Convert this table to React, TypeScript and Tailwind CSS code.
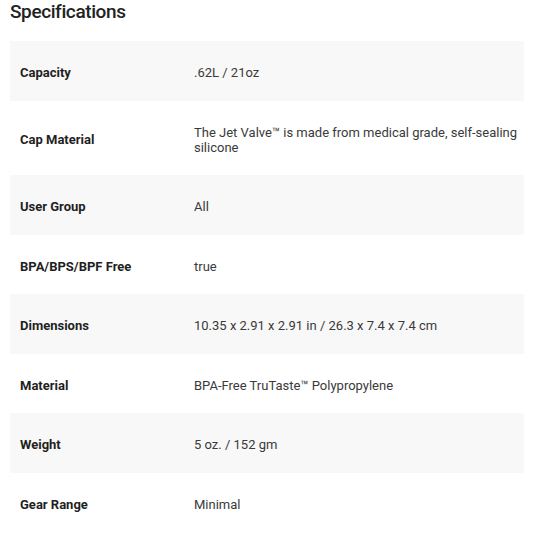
import React from "react";

// Linhas da tabela de especificações
const specs: { label: string; value: string }[] = [
  { label: "Capacity", value: ".62L / 21oz" },
  { label: "Cap Material", value: "The Jet Valve™ is made from medical grade, self-sealing silicone" },
  { label: "User Group", value: "All" },
  { label: "BPA/BPS/BPF Free", value: "true" },
  { label: "Dimensions", value: "10.35 x 2.91 x 2.91 in / 26.3 x 7.4 x 7.4 cm" },
  { label: "Material", value: "BPA-Free TruTaste™ Polypropylene" },
  { label: "Weight", value: "5 oz. / 152 gm" },
  { label: "Gear Range", value: "Minimal" },
];

const App: React.FC = () => {
  return (
    <div className="w-[533px] h-[533px] overflow-hidden bg-white font-['Roboto',sans-serif] text-[#333]">
      <h2 className="px-[10px] h-[41px] text-[19px] leading-[24px] font-medium tracking-[-0.4px] text-[#222]">Specifications</h2>
      <div className="mx-[10px] w-[514px]">
        {specs.map((row, i) => (
          <div
            key={row.label}
            className={`flex items-center pt-[24px] pb-[20.5px] leading-[15px] ${i % 2 === 0 ? "bg-[#f8f8f8]" : "bg-white"}`}
          >
            <div className="w-[184px] shrink-0 pl-[10px] text-[13px] font-bold text-[#1f1f1f]">{row.label}</div>
            <div className="pr-[2px] text-[13px] text-[#3a3a3a]">{row.value}</div>
          </div>
        ))}
      </div>
    </div>
  );
};

export default App;
